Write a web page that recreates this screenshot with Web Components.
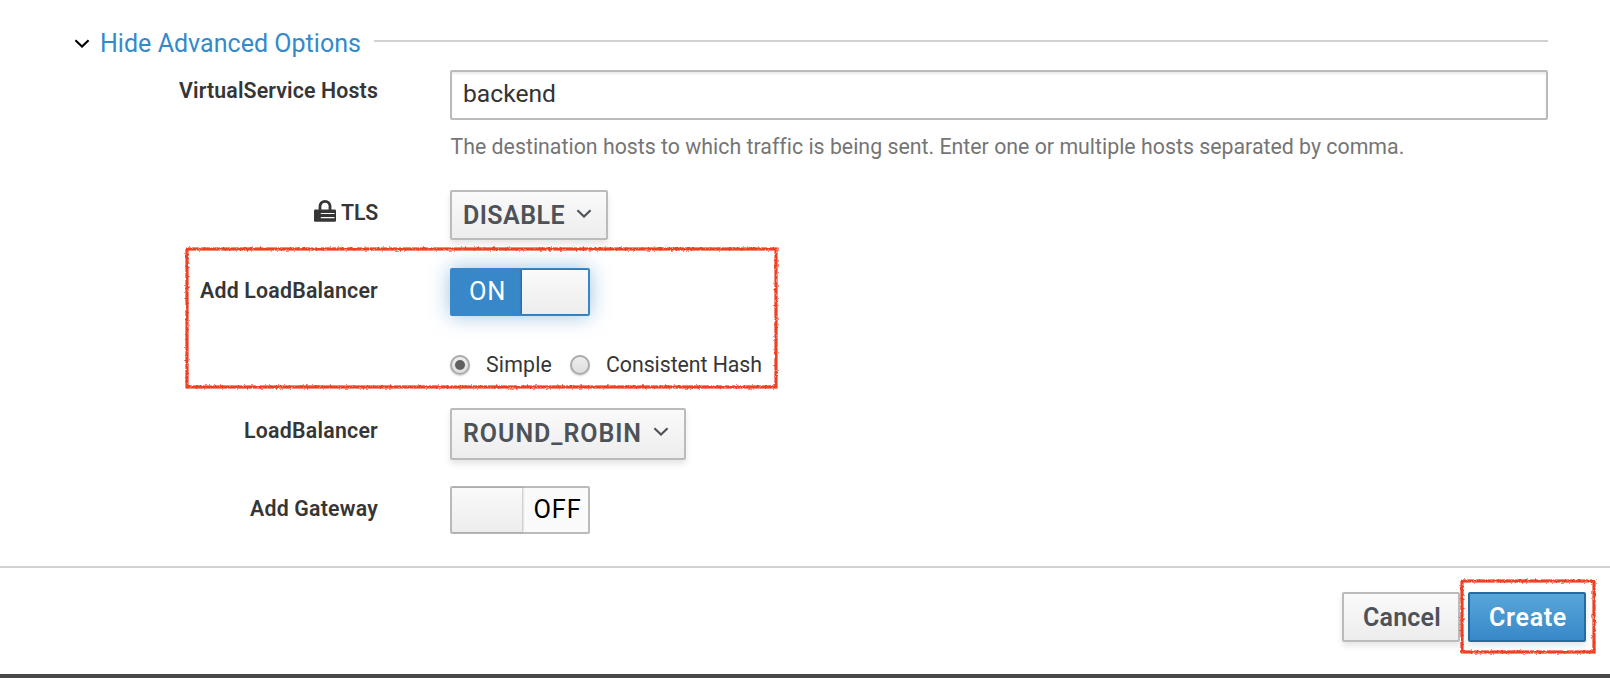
<!DOCTYPE html>
<html lang="en">
<head>
<meta charset="utf-8">
<title>Create service routing</title>
<style>
html,body{margin:0;height:100%}
body{background:#fff;overflow:hidden;font-family:Roboto,"Noto Sans",sans-serif;color:#333}
</style>
</head>
<body>
<wizard-page></wizard-page>
<script>
const define=(name,html,setup)=>customElements.define(name,class extends HTMLElement{
  connectedCallback(){
    if(this.shadowRoot)return;
    const t=document.createElement('template');
    t.innerHTML=html;
    this.attachShadow({mode:'open'}).append(t.content.cloneNode(true));
    if(setup)setup.call(this,this.shadowRoot);
  }
});

/* One line of text, tracked so that it fills the given width. */
define('fit-text',`<style>:host{display:inline-block;white-space:nowrap;text-align:left;flex:none}</style><span><slot></slot></span>`,function(root){
  const w=+this.getAttribute('width'),n=this.textContent.length,s=root.querySelector('span');
  s.style.letterSpacing='0px';
  const gap=(w-s.getBoundingClientRect().width)/n;
  s.style.letterSpacing=gap+'px';
  this.style.width=w+'px';
});

define('chevron-icon',`<style>:host{display:block;width:16px;height:10px}svg{display:block}</style>
<svg width="16" height="10" viewBox="0 0 16 10"><path d="M1.4 1.2 8 7.6l6.6-6.4" fill="none" stroke="currentColor" stroke-width="2.1"/></svg>`);

define('lock-icon',`<style>:host{display:block;width:22px;height:22px}svg{display:block}</style>
<svg width="22" height="22" viewBox="0 0 22 22"><path d="M6 11V6.4a5 5 0 0 1 10 0V11" fill="none" stroke="currentColor" stroke-width="2.8"/><rect y="9.4" width="22" height="12.4" rx="1.2" fill="currentColor"/><path d="M6.8 13.5h13.7M6.8 17.6h13.7" stroke="#fff" stroke-width="1.2"/></svg>`);

define('section-header',`<style>
:host{display:flex;height:70px;padding:0 62px 0 74px;box-sizing:border-box;font-size:25px;line-height:30px;color:#338acb}
chevron-icon{color:#000;margin:39px 10px 0 0}
::slotted(*){margin-top:29px}
hr{flex:1;height:2px;border:0;background:#d1d1d1;margin:40px 0 0 13px}
</style><chevron-icon></chevron-icon><slot></slot><hr>`);

define('form-row',`<style>
:host{display:grid;grid-template-columns:378px 1fr;column-gap:72px;padding-right:62px;box-sizing:border-box}
.label{display:flex;justify-content:flex-end;font-size:21.3px;font-weight:600;line-height:30px;padding-top:var(--drop,7.6px);color:#363636}
</style><div class="label"><slot name="label"></slot></div><div><slot></slot></div>`);

define('text-field',`<style>
:host{display:block}
.box{height:50px;box-sizing:border-box;border:2px solid #bbb;border-radius:2px;padding:5px 11px;font-size:24.6px;line-height:34px;box-shadow:inset 0 2px 2px rgba(3,3,3,.075)}
.help{font-size:21.3px;line-height:30px;margin-top:11.5px;color:#757575;padding-left:.5px}
</style><div class="box"><slot></slot></div><div class="help"><slot name="help"></slot></div>`);

define('push-button',`<style>
:host{display:flex;box-sizing:border-box;height:50px;border:2px solid #bbb;border-radius:2px;background:linear-gradient(#fafafa,#ededed);box-shadow:0 4px 6px rgba(3,3,3,.1);color:#4d5258;font-size:25px;font-weight:600;line-height:34px;padding:7px 0 0 11px;width:var(--w)}
:host([primary]){color:#fff;border-color:#246ba1;background:linear-gradient(#57a6d9,#3888c9)}
:host([big]){padding:6.5px 0 0 19px}
chevron-icon{display:none;margin:9.5px 0 0 11px}
:host([menu]) chevron-icon{display:block}
</style><slot></slot><chevron-icon></chevron-icon>`);

define('toggle-switch',`<style>
:host{display:grid;grid-template-columns:70px 66px;box-sizing:border-box;width:140px;height:48px;border:2px solid #bbb;border-radius:2px;background:#fafafa;font-size:25.4px;line-height:34px;color:#000}
:host([on]){border-color:#3888c9;background:#3888c9;color:#fff;box-shadow:0 0 20px rgba(56,136,201,.5)}
.knob{background:linear-gradient(#fafafa,#ededed);box-shadow:1px 0 2px rgba(3,3,3,.25)}
.text{padding:4px 0 0 11.5px}
:host([on]) .knob{order:2;box-shadow:-1px 0 2px rgba(3,3,3,.3)}
:host([on]) .text{padding-left:17px}
</style><div class="knob"></div><div class="text"><slot></slot></div>`);

define('radio-option',`<style>
:host{display:flex;font-size:21.3px;line-height:30px;color:#363636}
i{width:20px;height:20px;box-sizing:border-box;border:2px solid #aaa;border-radius:50%;background:linear-gradient(#eee,#ddd);margin:5px 16px 0 0;display:grid;place-items:center;box-shadow:0 1px 2px rgba(0,0,0,.18)}
:host([checked]) i::after{content:"";width:10px;height:10px;border-radius:50%;background:#606060}
</style><i></i><slot></slot>`);

/* Hand-drawn red outline laid over the controls it points at. */
define('marker-box',`<style>:host{position:absolute;pointer-events:none}svg{display:block;overflow:visible}</style>
<svg><defs><filter id="rough" filterUnits="userSpaceOnUse" x="-8" y="-8" width="700" height="200" color-interpolation-filters="sRGB"><feTurbulence type="fractalNoise" baseFrequency=".45" numOctaves="2" seed="4" result="n"/><feDisplacementMap in="SourceGraphic" in2="n" scale="3" xChannelSelector="R" yChannelSelector="G"/></filter></defs><rect x="0" y="0" fill="none" stroke="#ee4023" stroke-width="3.2" filter="url(#rough)"/></svg>`,function(root){
  const w=this.getAttribute('width'),h=this.getAttribute('height');
  for(const e of [root.querySelector('svg'),root.querySelector('rect')]){e.setAttribute('width',w);e.setAttribute('height',h);}
});

define('wizard-page',`<style>
:host{display:flex;flex-direction:column;height:678px;box-sizing:border-box;position:relative;overflow:hidden}
main{height:566px;flex:none}
.radios{display:flex;gap:10px}
footer{flex:1;border-top:2px solid #d1d1d1;border-bottom:4px solid #484848;display:flex;justify-content:flex-end;gap:8px;padding:24px 24px 0}
lock-icon{margin:2px 5px 0 0}
</style>
<main>
<section-header><fit-text width="261">Hide Advanced Options</fit-text></section-header>
<form-row style="height:120px;--drop:5.6px"><fit-text slot="label" width="199">VirtualService Hosts</fit-text>
<text-field><fit-text width="93">backend</fit-text><fit-text slot="help" width="952">The destination hosts to which traffic is being sent. Enter one or multiple hosts separated by comma.</fit-text></text-field></form-row>
<form-row style="height:78px"><lock-icon slot="label"></lock-icon><fit-text slot="label" width="37">TLS</fit-text>
<push-button menu style="--w:158px"><fit-text width="102">DISABLE</fit-text></push-button></form-row>
<form-row style="height:82px"><fit-text slot="label" width="178">Add LoadBalancer</fit-text>
<toggle-switch on><fit-text width="37">ON</fit-text></toggle-switch></form-row>
<form-row style="height:58px"><div class="radios"><radio-option checked><fit-text width="66">Simple</fit-text></radio-option><radio-option style="margin-left:8px"><fit-text width="156">Consistent Hash</fit-text></radio-option></div></form-row>
<form-row style="height:78px"><fit-text slot="label" width="134">LoadBalancer</fit-text>
<push-button menu style="--w:236px;height:52px"><fit-text width="179">ROUND_ROBIN</fit-text></push-button></form-row>
<form-row><fit-text slot="label" width="128">Add Gateway</fit-text>
<toggle-switch><fit-text width="48">OFF</fit-text></toggle-switch></form-row>
</main>
<footer><push-button big style="--w:118px"><fit-text width="78">Cancel</fit-text></push-button><push-button big primary style="--w:118px"><fit-text width="78">Create</fit-text></push-button></footer>
<marker-box width="589" height="138" style="left:187px;top:248.5px"></marker-box>
<marker-box width="132" height="71" style="left:1462px;top:580.5px"></marker-box>`);
</script>
</body>
</html>
